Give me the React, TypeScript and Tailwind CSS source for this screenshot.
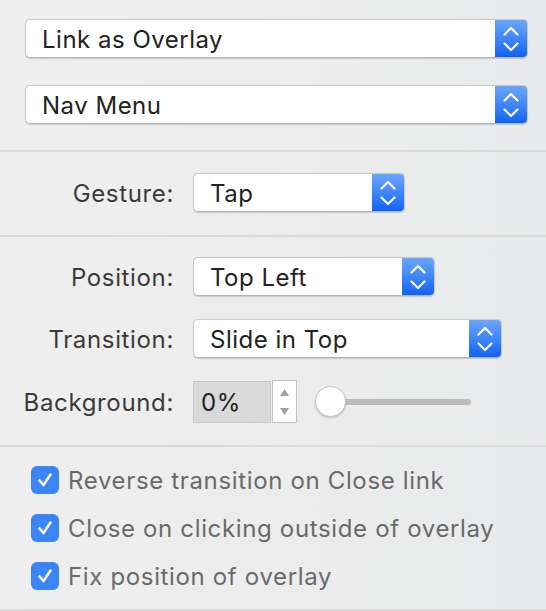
import React from 'react'

const font = { fontFamily: 'Inter, "Noto Sans", sans-serif' }

function Chevrons() {
  return (
    <svg width="16" height="26" viewBox="0 0 16 26" fill="none" stroke="white" strokeWidth="2.2" strokeLinecap="round" strokeLinejoin="round">
      <path d="M1.5 8.5 L8 2 L14.5 8.5" />
      <path d="M1.5 17.5 L8 24 L14.5 17.5" />
    </svg>
  )
}

function Select({ value, width }: { value: string; width: string }) {
  return (
    <div className={`flex h-[39px] ${width} shrink-0 overflow-hidden rounded-[5px] border border-[#c9c9c9] border-b-[#b4b4b4] bg-white shadow-[0_0.5px_1px_rgba(0,0,0,0.15)]`}>
      <div className="flex flex-1 items-center pl-[16px] pt-[2px] text-[24px] tracking-[0.5px] text-[#222]">{value}</div>
      <div className="flex w-[32px] items-center justify-center bg-gradient-to-b from-[#6aa6fb] to-[#0a62f7]">
        <Chevrons />
      </div>
    </div>
  )
}

function Row({ label, children }: { label: string; children: React.ReactNode }) {
  return (
    <div className="flex items-center">
      <div className="w-[174px] shrink-0 pt-[2px] text-right text-[24px] tracking-[0.65px] text-[#3a3a3a]">{label}</div>
      <div className="ml-[19px] flex items-center">{children}</div>
    </div>
  )
}

function Check({ label }: { label: string }) {
  return (
    <div className="flex h-[28px] items-center">
      <div className="flex h-[28px] w-[28px] shrink-0 items-center justify-center rounded-[6px] bg-[#3a86f7]">
        <svg width="18" height="18" viewBox="0 0 18 18" fill="none" stroke="white" strokeWidth="2.6" strokeLinecap="round" strokeLinejoin="round">
          <path d="M3.5 9.5 L7.5 14 L14.5 3.5" />
        </svg>
      </div>
      <span className="ml-[9px] pt-[2px] text-[24px] tracking-[0.65px] text-[#6a6a6a]">{label}</span>
    </div>
  )
}

function Divider() {
  return <div className="h-[2px] w-full bg-[#dbdbdb]" />
}

export default function App() {
  return (
    <div className="h-[611px] w-[546px] overflow-hidden bg-gradient-to-r from-[#efefef] to-[#e9eaeb]" style={font}>
      <div className="flex flex-col gap-[27px] pb-[26px] pl-[25px] pr-[18px] pt-[19px]">
        <Select value="Link as Overlay" width="w-full" />
        <Select value="Nav Menu" width="w-full" />
      </div>
      <Divider />
      <div className="pb-[23px] pt-[21px]">
        <Row label="Gesture:">
          <Select value="Tap" width="w-[212px]" />
        </Row>
      </div>
      <Divider />
      <div className="flex flex-col pb-[22px] pt-[20px]">
        <Row label="Position:">
          <Select value="Top Left" width="w-[242px]" />
        </Row>
        <div className="mt-[23px]">
          <Row label="Transition:">
            <Select value="Slide in Top" width="w-[309px]" />
          </Row>
        </div>
        <div className="mt-[22px]">
          <Row label="Background:">
            <div className="flex h-[42px] w-[78px] items-center border border-[#c6c6c6] bg-[#d9d9d9] pl-[7px] pt-[2px] text-[24px] tracking-[0.5px] text-[#222]">0%</div>
            <div className="ml-[1px] flex h-[43px] w-[25px] flex-col items-center justify-center gap-[12px] border border-[#c2c2c2] bg-white">
              <svg width="9" height="7" viewBox="0 0 9 7"><path d="M4.5 0 L9 7 L0 7 Z" fill="#a0a0a0" /></svg>
              <svg width="9" height="7" viewBox="0 0 9 7"><path d="M0 0 L9 0 L4.5 7 Z" fill="#a0a0a0" /></svg>
            </div>
            <div className="relative ml-[18px] flex h-[31px] w-[156px] items-center">
              <div className="ml-[10px] h-[6px] flex-1 rounded-full bg-[#bcbcbc]" />
              <div className="absolute left-0 top-0 h-[31px] w-[31px] rounded-full border border-[#c8c8c8] bg-white shadow-[0_1px_2px_rgba(0,0,0,0.2)]" />
            </div>
          </Row>
        </div>
      </div>
      <Divider />
      <div className="flex flex-col gap-[20px] pb-[19px] pl-[31px] pt-[19px]">
        <Check label="Reverse transition on Close link" />
        <Check label="Close on clicking outside of overlay" />
        <Check label="Fix position of overlay" />
      </div>
      <Divider />
    </div>
  )
}
